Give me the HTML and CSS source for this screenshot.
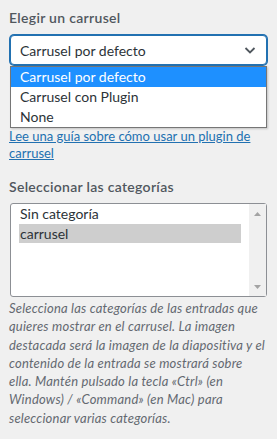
FILE: index.html
```html
<!DOCTYPE html>
<html lang="es">
<head>
<meta charset="utf-8">
<link rel="stylesheet" href="styles.css">
</head>
<body>
<div class="panel">
  <h3 class="title first">Elegir un carrusel</h3>
  <div class="select-wrap">
    <div class="select">
      <span>Carrusel por defecto</span>
      <svg class="chev" width="20" height="20" viewBox="0 0 20 20"><path d="M5.5 8l4.5 4.5L14.5 8" fill="none" stroke="#50575e" stroke-width="1.8"/></svg>
    </div>
    <ul class="dropdown">
      <li class="active">Carrusel por defecto</li>
      <li>Carrusel con Plugin</li>
      <li>None</li>
    </ul>
  </div>
  <p class="guide"><a href="#">Lee una guía sobre cómo usar un plugin de carrusel</a></p>
  <h3 class="title">Seleccionar las categorías</h3>
  <div class="listbox">
    <ul class="items">
      <li>Sin categoría</li>
      <li class="sel">carrusel</li>
    </ul>
    <div class="scrollbar">
      <svg width="17" height="10" viewBox="0 0 17 10"><path d="M5 7h7L8.5 3z" fill="#a3a3a3"/></svg>
      <svg width="17" height="10" viewBox="0 0 17 10"><path d="M5 3h7L8.5 7z" fill="#a3a3a3"/></svg>
    </div>
  </div>
  <p class="desc">Selecciona las categorías de las entradas que quieres mostrar en el carrusel. La imagen destacada será la imagen de la diapositiva y el contenido de la entrada se mostrará sobre ella. Mantén pulsado la tecla «Ctrl» (en Windows) / «Command» (en Mac) para seleccionar varias categorías.</p>
</div>
</body>
</html>
```
FILE: styles.css
```css
html, body {
  margin: 0;
  padding: 0;
  background: #f0f0f0;
}
body {
  font-family: Lato, "Open Sans", sans-serif;
  font-size: 13px;
  color: #2c3338;
}
.panel {
  width: 258px;
  padding: 8px 0 0 9px;
}
.title {
  margin: 0;
  font-size: 14px;
  font-weight: 600;
  line-height: 20px;
  letter-spacing: 0.3px;
  color: #50575e;
}
.first { margin-bottom: 7px; }
.select-wrap {
  position: relative;
  margin-left: 1px;
}
.select {
  box-sizing: border-box;
  height: 30px;
  border: 1px solid #2271b1;
  box-shadow: 0 0 0 1px #2271b1;
  border-radius: 4px;
  background: #fff;
  display: flex;
  align-items: center;
  justify-content: space-between;
  padding: 0 6px 0 9px;
  font-size: 14px;
  color: #2c3338;
}
.chev { display: block; }
.dropdown {
  position: absolute;
  top: 31px;
  left: 0;
  right: 0;
  margin: 0;
  padding: 0;
  list-style: none;
  background: #fff;
  border: 1px solid #767676;
  box-shadow: 1px 1px 2px rgba(0,0,0,0.2);
  font-size: 14px;
  color: #2c3338;
}
.dropdown li {
  height: 20px;
  line-height: 20px;
  padding-left: 9px;
}
.dropdown li.active {
  background: #1e90ff;
  color: #fff;
}
.guide {
  margin: 63px 0 0;
  line-height: 17px;
}
.guide a {
  color: #2271b1;
  text-decoration: underline;
}
.title + .listbox { margin-top: 6px; }
.guide + .title { margin-top: 15px; }
.listbox {
  margin-left: 1px;
  box-sizing: border-box;
  height: 94px;
  border: 1px solid #8c8f94;
  border-radius: 3px;
  background: #fff;
  display: flex;
}
.items {
  flex: 1;
  margin: 0;
  padding: 0 8px;
  list-style: none;
  font-size: 14px;
  color: #2c3338;
}
.items li {
  height: 20px;
  line-height: 20px;
  padding-left: 1px;
}
.items li.sel { background: #cecece; height: 19px; line-height: 19px; }
.scrollbar {
  width: 17px;
  background: #f0f0f0;
  display: flex;
  flex-direction: column;
  justify-content: space-between;
  padding: 5px 0 4px;
}
.scrollbar svg { display: block; }
.desc {
  margin: 2px 0 0;
  font-style: italic;
  line-height: 18.3px;
  letter-spacing: 0.2px;
  color: #646970;
}
```
